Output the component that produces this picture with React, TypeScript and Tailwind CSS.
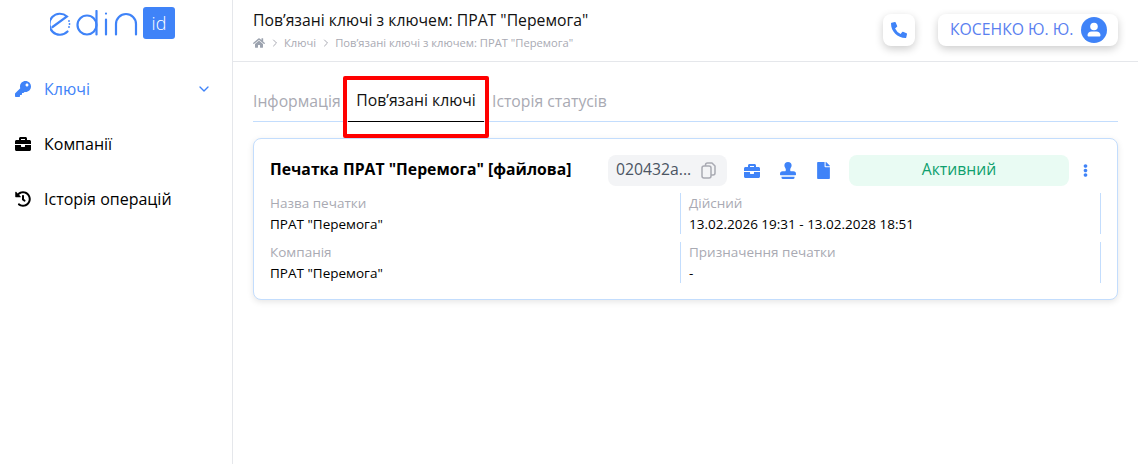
import { ChevronDown, ChevronRight } from "lucide-react";
import { FaBriefcase, FaEllipsisV, FaFile, FaHistory, FaHome, FaKey, FaPhoneAlt } from "react-icons/fa";

function EdinLogo() {
  return (
    <svg width="90" height="28" viewBox="0 0 90 28" fill="none" stroke="#3f83f8" strokeWidth="2.200" strokeLinecap="round">
      <path d="M17.500 21.500A10.500 10.500 0 1 1 17 6.500L2.500 17" />
      <path d="M19 11v.1M19.500 14v.1M19 17v.1" strokeWidth="1.800" />
      <circle cx="37" cy="15" r="9.500" />
      <path d="M46.500 1v23.500" />
      <path d="M56 3.500v.1M56 9.500v15" />
      <path d="M66 24.500V14a10 10 0 0 1 20 0v10.500" />
    </svg>
  );
}

function CopyIcon() {
  return (
    <svg width="15" height="17" viewBox="0 0 15 17" fill="none" stroke="#a9aab3" strokeWidth="1.500" strokeLinejoin="round">
      <rect x="1" y="4" width="9" height="12" rx="2" />
      <path d="M4.500 4V3a2 2 0 0 1 2-2h4.500L14 4v7a2 2 0 0 1-2 2h-2" />
    </svg>
  );
}

function StampIcon() {
  return (
    <svg width="16" height="17" viewBox="0 0 16 17" fill="currentColor">
      <path d="M8 0a3.600 3.600 0 0 0-3.600 3.600c0 1.500.9 2.300 1.300 3.300.3.800.1 1.700-.3 2.400H2.600A2.600 2.600 0 0 0 0 11.900v.6c0 .4.300.7.700.7h14.600c.4 0 .7-.3.700-.7v-.6a2.600 2.600 0 0 0-2.600-2.600h-2.800c-.4-.7-.6-1.600-.3-2.400.4-1 1.300-1.800 1.300-3.300A3.600 3.600 0 0 0 8 0Z" />
      <path d="M1.500 14.700h13v.8a1.500 1.500 0 0 1-1.500 1.500H3a1.500 1.500 0 0 1-1.500-1.500Z" />
    </svg>
  );
}

function UserIcon() {
  return (
    <svg width="26" height="26" viewBox="0 0 26 26">
      <circle cx="13" cy="13" r="13" fill="#3f83f8" />
      <circle cx="13" cy="9.500" r="3.800" fill="#fff" />
      <path d="M6.500 18.200c0-2.300 1.900-3.700 4-3.700h5c2.100 0 4 1.400 4 3.700 0 .8-.6 1.300-1.300 1.300H7.800c-.7 0-1.300-.5-1.300-1.300Z" fill="#fff" />
    </svg>
  );
}

function NavItem({ icon, label, active }: { icon: React.ReactNode; label: string; active?: boolean }) {
  return (
    <div className={`flex h-[55px] items-center pl-[15px] pr-[20px] text-[16px] ${active ? "text-[#3f83f8]" : "text-black"}`}>
      <span className="flex w-[29px] shrink-0 items-center">{icon}</span>
      <span className="flex-1">{label}</span>
      {active && <ChevronDown size={16} strokeWidth={2} />}
    </div>
  );
}

function Field({ label, value }: { label: string; value: string }) {
  return (
    <div className="flex h-[41px] flex-col gap-[2px] pt-[1px] text-[13.500px] leading-[19px]">
      <div className="text-[#a9aab3]">{label}</div>
      <div className="text-black">{value}</div>
    </div>
  );
}

export default function App() {
  return (
    <div className="flex h-[464px] w-[1138px] overflow-hidden bg-white font-['Open_Sans',sans-serif]">
      <aside className="h-full w-[233px] shrink-0 border-r border-[#e5e7eb]">
        <div className="flex h-[61px] items-start pl-[50px] pt-[7px]">
          <div className="mt-[3px]">
            <EdinLogo />
          </div>
          <div className="ml-[3px] flex h-[32px] w-[32px] items-center justify-center rounded-[3px] bg-[#3f83f8] text-[18px] font-light text-white">
            id
          </div>
        </div>
        <nav>
          <NavItem active label="Ключі" icon={<FaKey size={16} />} />
          <NavItem label="Компанії" icon={<FaBriefcase size={16} />} />
          <NavItem label="Історія операцій" icon={<FaHistory size={16} />} />
        </nav>
      </aside>

      <main className="relative flex-1 border-r border-[#e5e7eb]">
        <header className="flex h-[62px] items-start justify-between border-b border-[#e5e7eb] px-[20px]">
          <div className="pt-[9px]">
            <div className="text-[15.750px] leading-[22px] text-[#111]">Пов’язані ключі з ключем: ПРАТ "Перемога"</div>
            <div className="mt-[5px] flex items-center text-[11.200px] leading-[14px] text-[#a9aab3]">
              <FaHome size={12} className="text-[#9ca3af]" />
              <ChevronRight size={12} className="mx-[3.500px]" />
              <span>Ключі</span>
              <ChevronRight size={12} className="mx-[3.500px]" />
              <span>Пов’язані ключі з ключем: ПРАТ "Перемога"</span>
            </div>
          </div>
          <div className="flex items-center gap-[23px] pt-[14px]">
            <div className="flex h-[32px] w-[32px] items-center justify-center rounded-[8px] bg-white text-[#3f83f8] shadow-[0_3px_8px_rgba(0,0,0,0.2)]">
              <FaPhoneAlt size={16} />
            </div>
            <div className="flex h-[32px] w-[180px] items-center justify-between rounded-[8px] bg-white pl-[12px] pr-[11px] text-[15.750px] text-[#5a7ff0] shadow-[0_3px_8px_rgba(0,0,0,0.2)]">
              <span>КОСЕНКО Ю. Ю.</span>
              <UserIcon />
            </div>
          </div>
        </header>

        <div className="px-[20px]">
          <div className="mt-[15px] flex h-[45px] border-b border-[#c3ddfd] text-[15.750px]">
            <div className="flex h-[45px] w-[87px] items-center pt-[4px] text-[#a9aab3]">Інформація</div>
            <div className="ml-[8px] flex h-[45px] w-[136px] items-center justify-center border-b border-black pt-[4px] text-[#111]">
              Пов’язані ключі
            </div>
            <div className="ml-[8px] flex h-[45px] items-center pt-[4px] text-[#a9aab3]">Історія статусів</div>
          </div>

          <div className="mt-[16px] h-[162px] rounded-[8px] border border-[#c3ddfd] bg-white px-[16px] pt-[16px] shadow-[0_2px_6px_rgba(0,0,0,0.1)]">
            <div className="flex h-[31px] items-center">
              <div className="w-[338px] pb-[2px] text-[15.750px] font-bold text-black">Печатка ПРАТ "Перемога" [файлова]</div>
              <div className="flex h-[31px] w-[119px] items-center justify-between rounded-[8px] bg-[#f3f4f6] pl-[8px] pr-[11px] text-[15.750px] text-[#4b5563]">
                <span className="pb-[2px]">020432a...</span>
                <CopyIcon />
              </div>
              <div className="ml-[17px] flex w-[105px] items-center text-[#3f83f8]">
                <span className="w-[36px]"><FaBriefcase size={16} /></span>
                <span className="w-[35px]"><StampIcon /></span>
                <span><FaFile size={17} /></span>
              </div>
              <div className="flex h-[31px] w-[220px] items-center justify-center rounded-[8px] bg-[#e9fbf3] pb-[2px] text-[15.750px] text-[#0e9f6e]">
                Активний
              </div>
              <div className="ml-[10px] text-[#3f83f8]"><FaEllipsisV size={13} /></div>
            </div>

            <div className="mt-[7px] grid grid-cols-[410px_421px] gap-y-[8px]">
              <Field label="Назва печатки" value={'ПРАТ "Перемога"'} />
              <div className="border-x border-[#c3ddfd] pl-[8px]">
                <Field label="Дійсний" value="13.02.2026 19:31 - 13.02.2028 18:51" />
              </div>
              <Field label="Компанія" value={'ПРАТ "Перемога"'} />
              <div className="border-x border-[#c3ddfd] pl-[8px]">
                <Field label="Призначення печатки" value="-" />
              </div>
            </div>
          </div>
        </div>

        <div className="absolute left-[110px] top-[76px] h-[62px] w-[146px] rounded-[2px] border-[4px] border-[#ff0000]" />
      </main>
    </div>
  );
}
